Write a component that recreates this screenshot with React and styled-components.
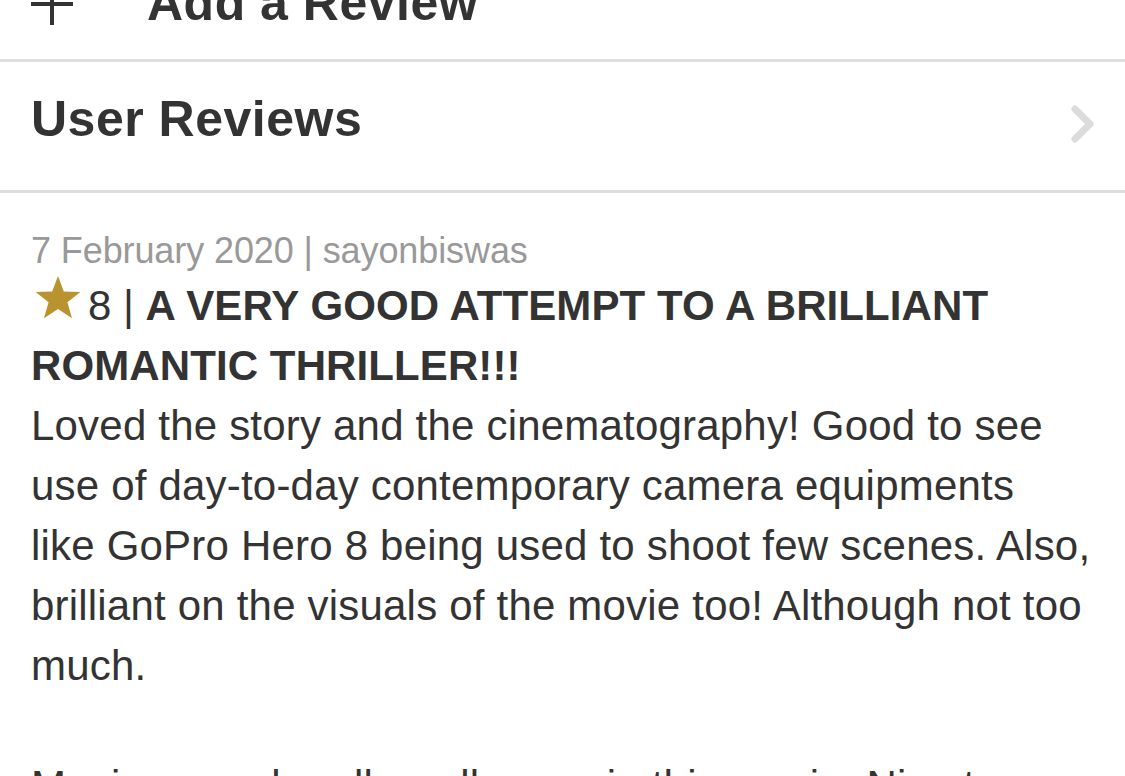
import React from "react";
import styled, { createGlobalStyle } from "styled-components";

const Global = createGlobalStyle`
  html, body { margin: 0; padding: 0; background: #fff; }
  body { font-family: "Liberation Sans", Arial, Helvetica, sans-serif; color: #333; overflow: hidden; }
`;

const Page = styled.div`
  width: 1125px;
  height: 776px;
  overflow: hidden;
  background: #fff;
`;

const Stack = styled.div`
  display: flex;
  flex-direction: column;
  margin-top: -69px;
`;

const Row = styled.div`
  display: flex;
  align-items: center;
  gap: 74px;
  padding: ${(p) => p.$pt}px 31px ${(p) => p.$pb}px 31px;
  border-bottom: 3px solid #dedede;
`;

const RowTitle = styled.div`
  flex: 1;
  font-size: 50px;
  line-height: 60px;
  font-weight: 700;
  color: #333;
  letter-spacing: 0.5px;
`;

const PlusIcon = styled.svg`
  width: 42px;
  height: 42px;
  flex: none;
  margin-top: 2px;
`;

const Chevron = styled.svg`
  width: 30px;
  height: 42px;
  flex: none;
  margin-right: -3px;
  margin-top: 10px;
`;

const Review = styled.div`
  padding: 34px 20px 0 31px;
`;

const Meta = styled.div`
  font-size: 36px;
  line-height: 48px;
  color: #999;
  letter-spacing: -0.1px;
`;

const Headline = styled.div`
  font-size: 42px;
  line-height: 60px;
  color: #333;
`;

const Score = styled.span`
  font-weight: 400;
`;

const Title = styled.span`
  font-weight: 700;
  letter-spacing: 0.1px;
`;

const StarIcon = styled.svg`
  width: 48px;
  height: 46px;
  vertical-align: -1px;
  margin-left: 3px;
  margin-right: 6px;
`;

const Body = styled.p`
  margin: 0 0 60px 0;
  font-size: 42px;
  line-height: 60px;
  color: #333;
  letter-spacing: 0.2px;
  white-space: nowrap;
`;

export default function App() {
  return (
    <Page>
      <Global />
      <Stack>
        <Row $pt={42} $pb={26}>
          <PlusIcon viewBox="0 0 42 42">
            <path d="M21 0 V42 M0 21 H42" stroke="#333" strokeWidth="4" fill="none" />
          </PlusIcon>
          <RowTitle>Add a Review</RowTitle>
        </Row>
        <Row $pt={27} $pb={41}>
          <RowTitle>User Reviews</RowTitle>
          <Chevron viewBox="0 0 30 42">
            <path d="M8 6 L23 21 L8 36" stroke="#dcdcdc" strokeWidth="7" fill="none" strokeLinecap="round" strokeLinejoin="round" />
          </Chevron>
        </Row>
      </Stack>
      <Review>
        <Meta>7 February 2020 | sayonbiswas</Meta>
        <Headline>
          <StarIcon viewBox="0 0 24 23">
            <path
              d="M12 0.5 L14.9 8.2 L23.2 8.5 L16.7 13.6 L19 21.6 L12 17 L5 21.6 L7.3 13.6 L0.8 8.5 L9.1 8.2 Z"
              fill="#b8932e"
            />
          </StarIcon>
          <Score>8 | </Score>
          <Title>A VERY GOOD ATTEMPT TO A BRILLIANT ROMANTIC THRILLER!!!</Title>
        </Headline>
        <Body>
          Loved the story and the cinematography! Good to see<br />
          use of day-to-day contemporary camera equipments<br />
          like GoPro Hero 8 being used to shoot few scenes. Also,<br />
          brilliant on the visuals of the movie too! Although not too<br />
          much.
        </Body>
        <Body>
          Music scored really well, even in this movie. Nice to see
        </Body>
      </Review>
    </Page>
  );
}
